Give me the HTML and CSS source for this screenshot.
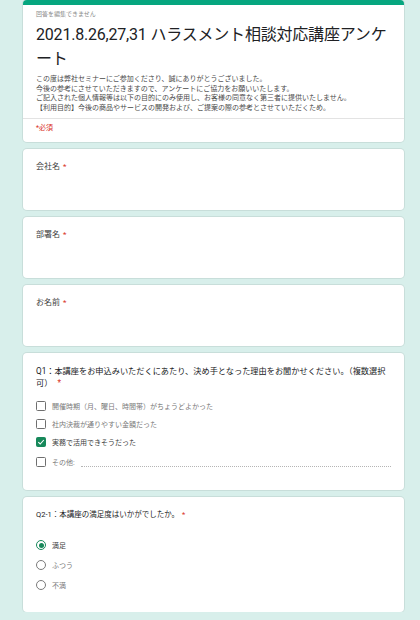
FILE: index.html
```html
<!DOCTYPE html>
<html lang="ja">
  <head>
    <meta charset="UTF-8" />
    <meta name="viewport" content="width=device-width, initial-scale=1.0" />
    <title>2021.8.26,27,31 ハラスメント相談対応講座アンケート</title>
    <link rel="stylesheet" href="styles.css">
  </head>

  <body>
    <div class="form">
      <div class="card head">
        <div class="head-body">
          <div class="note">回答を編集できません</div>
          <h1 class="title">2021.8.26,27,31 ハラスメント相談対応講座アンケート</h1>
          <div class="desc">
            この度は弊社セミナーにご参加くださり、誠にありがとうございました。<br />
            今後の参考にさせていただきますので、アンケートにご協力をお願いいたします。<br />
            ご記入された個人情報等は以下の目的にのみ使用し、お客様の同意なく第三者に提供いたしません。<br />
            【利用目的】今後の商品やサービスの開発および、ご提案の際の参考とさせていただくため。
          </div>
        </div>
        <div class="required-note">*必須</div>
      </div>

      <div class="card field">
        <div class="label">会社名<span class="star">*</span></div>
      </div>

      <div class="card field">
        <div class="label">部署名<span class="star">*</span></div>
      </div>

      <div class="card field">
        <div class="label">お名前<span class="star">*</span></div>
      </div>

      <div class="card question q1">
        <div class="label q">Q1：本講座をお申込みいただくにあたり、決め手となった理由をお聞かせください。（複数選択<span class="nowrap">可）<span class="star">*</span></span></div>
        <div class="options">
          <label class="option"><span class="box"></span>開催時期（月、曜日、時間帯）がちょうどよかった</label>
          <label class="option"><span class="box"></span>社内決裁が通りやすい金額だった</label>
          <label class="option on">
            <span class="box checked">
              <svg width="8" height="8" viewBox="0 0 8 8"><path d="M1.3 4.2 L3.2 6 L6.8 2" fill="none" stroke="#fff" stroke-width="1.1" /></svg>
            </span>実務で活用できそうだった
          </label>
          <label class="option other"><span class="box"></span>その他:<span class="line"></span></label>
        </div>
      </div>

      <div class="card question q2">
        <div class="label q">Q2-1：本講座の満足度はいかがでしたか。<span class="star">*</span></div>
        <div class="options radios">
          <label class="option on"><span class="radio selected"></span>満足</label>
          <label class="option"><span class="radio"></span>ふつう</label>
          <label class="option"><span class="radio"></span>不満</label>
        </div>
      </div>
    </div>
  </body>
</html>
```

FILE: styles.css
```css
html,
body {
  margin: 0;
  padding: 0;
  background-color: #d8efeb;
  font-family: Roboto, "Noto Sans CJK JP", sans-serif;
  color: #202124;
}

.form {
  width: 381px;
  margin-left: 23px;
  display: flex;
  flex-direction: column;
  gap: 7px;
}

.card {
  background-color: #fff;
  border-radius: 4px;
  box-shadow: 0 0 0 1px rgba(0, 0, 0, 0.07);
  box-sizing: border-box;
}

/* header card */
.head {
  border-top: 5px solid #06a67f;
  height: 142px;
}
.head-body {
  padding: 5px 13px 5px;
  border-bottom: 1px solid #e3e3e3;
}
.note {
  font-size: 6px;
  line-height: 8px;
  color: #8a8a8a;
}
.title {
  margin: 5px 0 4px;
  font-size: 16px;
  line-height: 24px;
  font-weight: 400;
  letter-spacing: -0.2px;
}
.desc {
  font-size: 7px;
  line-height: 9.5px;
  color: #4a4a4a;
}
.required-note {
  padding: 4px 13px 0;
  font-size: 7px;
  line-height: 10px;
  color: #d93025;
}

/* short-answer cards */
.field {
  height: 61px;
  padding: 13px 13px 0;
}
.label {
  font-size: 8px;
  line-height: 10px;
  color: #3c3c3c;
}
.star {
  margin-left: 3px;
  color: #d93025;
}
.nowrap {
  white-space: nowrap;
}

/* question cards */
.question {
  padding: 13px 13px 0;
}
.q1 {
  height: 137px;
  padding-top: 12px;
}
.q1 .label.q {
  padding-right: 2px;
  font-size: 8.2px;
  line-height: 12px;
  color: #202124;
}
.q1 .star {
  margin-left: 5px;
}
.q1 .options {
  margin-top: 8px;
}
.q2 {
  height: 115px;
}
.q2 .label.q {
  font-size: 7.5px;
  line-height: 10px;
  color: #202124;
}

.options {
  margin-top: 9px;
  display: flex;
  flex-direction: column;
}
.radios {
  margin-top: 15px;
}
.option {
  height: 18px;
  display: flex;
  align-items: center;
  gap: 6px;
  font-size: 7px;
  color: #7a7a7a;
}
.radios .option {
  height: 20px;
}
.option.on {
  color: #3c3c3c;
}
.option.other {
  margin-top: 2px;
}

.box {
  width: 10px;
  height: 10px;
  box-sizing: border-box;
  border: 1.5px solid #6f6f6f;
  border-radius: 1.5px;
  display: flex;
  align-items: center;
  justify-content: center;
}
.box.checked {
  background-color: #17885a;
  border-color: #17885a;
}

.line {
  flex: 1;
  margin-top: 9px;
  border-bottom: 1px dotted #b5b5b5;
}

.radio {
  width: 10px;
  height: 10px;
  box-sizing: border-box;
  border: 1.2px solid #7a7a7a;
  border-radius: 50%;
  display: flex;
  align-items: center;
  justify-content: center;
}
.radio.selected {
  border-color: #17885a;
}
.radio.selected::after {
  content: "";
  width: 5px;
  height: 5px;
  border-radius: 50%;
  background-color: #17885a;
}
```
